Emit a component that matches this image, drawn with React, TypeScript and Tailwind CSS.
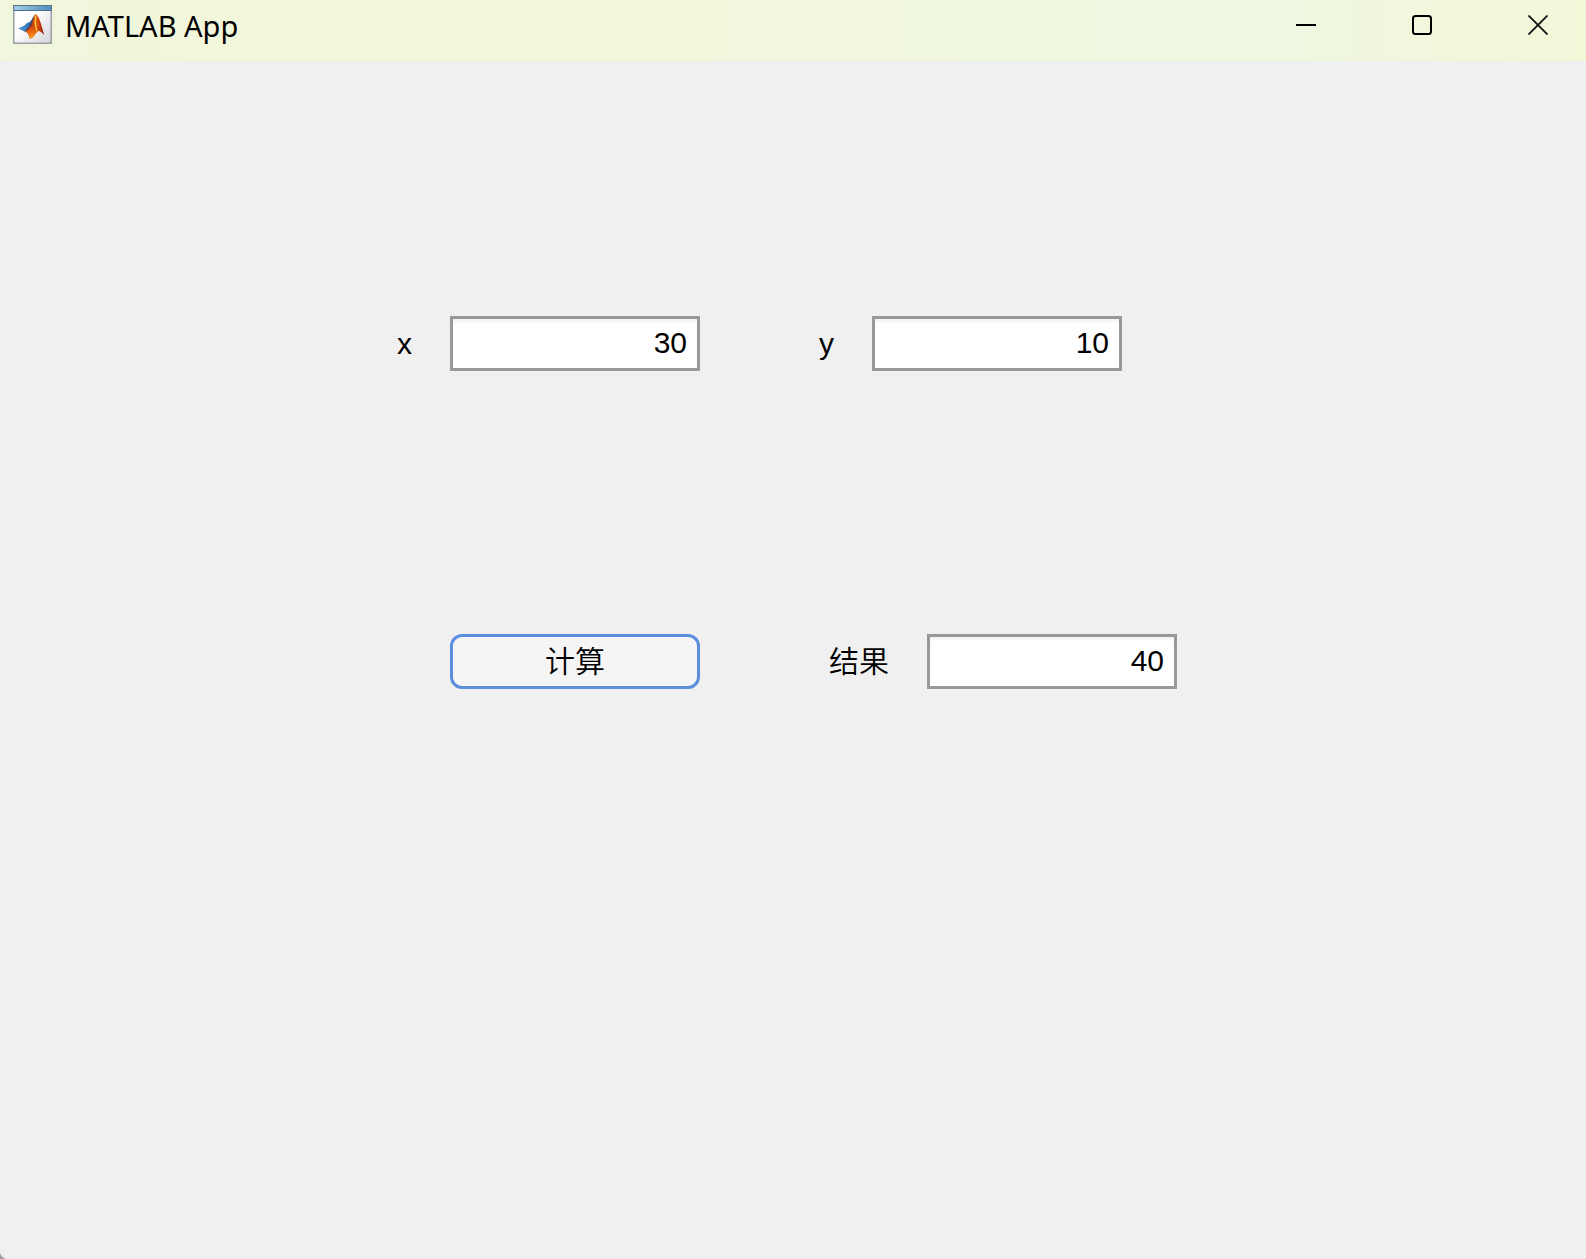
import React, { useState } from 'react'

interface NumberFieldProps {
  id: string
  label: string
  value: string
  onChange?: (value: string) => void
}

function NumberField({ id, label, value, onChange }: NumberFieldProps) {
  return (
    <div className="flex items-center gap-[38px]">
      <label htmlFor={id} className="leading-9 whitespace-nowrap">
        {label}
      </label>
      <input
        id={id}
        type="text"
        inputMode="decimal"
        value={value}
        readOnly={!onChange}
        onChange={e => onChange?.(e.target.value)}
        className="w-[250px] h-[55px] border-3 border-[#999999] bg-white pr-2.5 pb-0.5 text-right shadow-[inset_0_3px_2px_#f4f4f4] outline-none"
      />
    </div>
  )
}

// Membrane logo inside a small window frame
function AppIcon() {
  return (
    <svg width="39" height="39" viewBox="0 0 39 39" aria-hidden="true">
      <defs>
        <linearGradient id="frame" x1="0" y1="0" x2="1" y2="1">
          <stop offset="0.4" stopColor="#ffffff" />
          <stop offset="1" stopColor="#d3d3d8" />
        </linearGradient>
        <linearGradient id="bar" x1="0" y1="0" x2="1" y2="0">
          <stop offset="0" stopColor="#a3cce4" />
          <stop offset="1" stopColor="#4f8fc0" />
        </linearGradient>
        <linearGradient id="blue" x1="0" y1="0" x2="1" y2="0">
          <stop offset="0" stopColor="#5a9fd6" />
          <stop offset="0.55" stopColor="#3478b4" />
          <stop offset="1" stopColor="#28345c" />
        </linearGradient>
        <linearGradient id="flame" x1="0" y1="0" x2="1" y2="0">
          <stop offset="0" stopColor="#5b1f2a" />
          <stop offset="0.35" stopColor="#8f2a1a" />
          <stop offset="0.5" stopColor="#e8640f" />
          <stop offset="0.64" stopColor="#e2500f" />
          <stop offset="1" stopColor="#8a1a0e" />
        </linearGradient>
        <linearGradient id="base" x1="0" y1="0" x2="0" y2="1">
          <stop offset="0" stopColor="#c23a10" />
          <stop offset="0.5" stopColor="#e8640f" />
          <stop offset="1" stopColor="#fba62a" />
        </linearGradient>
      </defs>
      <rect x="0.75" y="0.75" width="37.5" height="37.5" fill="url(#frame)" stroke="#9a9ea6" strokeWidth="1.5" />
      <rect x="1" y="1" width="37" height="4.5" fill="url(#bar)" />
      <path d="M0.5 5.5h38" stroke="#4b6f91" strokeWidth="1" />
      <path d="M0.5 5V0.5h38V5" fill="none" stroke="#62727f" strokeWidth="1" />
      <path d="M5 23.5L11.5 20.5C13.5 18 14.5 17.5 16.5 17.3C18.5 16 20 11.5 22.3 9.3L19 20L13 27.5L10.5 26Z" fill="url(#blue)" />
      <path d="M22.5 9C20.5 11 19.5 18 16.5 21.5C14.8 23.7 13 25.5 11.5 26.6C14 26.5 15 28 17 33.8C21.5 32.5 22.5 26.5 25.5 26C27.5 26 29 28 31.5 30C29 24 27 11 22.5 9Z" fill="url(#flame)" />
      <path d="M12 26.7C15 25.8 17.5 22 20 19C21.5 21 23.5 24 25.3 26C22.5 27.5 21.5 32.5 17 33.8C15.3 28.7 14 26.6 12 26.7Z" fill="url(#base)" />
      <path d="M22.7 10.5C22 15 22.3 21 23.8 26" fill="none" stroke="#ffc83c" strokeWidth="1.3" />
    </svg>
  )
}

function TitleBar() {
  return (
    <header className="flex h-[61px] items-start justify-between bg-[linear-gradient(90deg,#f0f7dd_0%,#f2f6da_12%,#f3f6da_38%,#f1f7de_52%,#eff7e0_70%,#eff7e0_82%,#f2f6db_92%,#f4f6d8_100%)] pr-[38px] pl-[13px] pt-[5px]">
      <div className="flex items-start gap-[13px]">
        <AppIcon />
        <h1 className="text-[29px] leading-[42px] font-['Noto_Sans',sans-serif]">MATLAB App</h1>
      </div>
      <div className="flex gap-24 pt-2.5">
        <button type="button" aria-label="Minimize">
          <svg className="block" width="20" height="20" viewBox="0 0 20 20">
            <path d="M0 10h20" stroke="black" strokeWidth="2" />
          </svg>
        </button>
        <button type="button" aria-label="Maximize">
          <svg className="block" width="20" height="20" viewBox="0 0 20 20" fill="none">
            <rect x="1" y="1" width="18" height="18" rx="2.5" stroke="black" strokeWidth="2" />
          </svg>
        </button>
        <button type="button" aria-label="Close">
          <svg className="block" width="20" height="20" viewBox="0 0 20 20">
            <path d="M0.5 0.5l19 19M19.5 0.5l-19 19" stroke="#111111" strokeWidth="1.8" />
          </svg>
        </button>
      </div>
    </header>
  )
}

export default function App() {
  const [x, setX] = useState('30')
  const [y, setY] = useState('10')
  const [result, setResult] = useState('40')

  const calculate = () => setResult(String(Number(x) + Number(y)))

  return (
    <div className="relative flex min-h-screen flex-col overflow-hidden bg-[#f0f0f0] text-black">
      <TitleBar />
      <main className="mx-auto grid w-full max-w-[792px] grid-cols-[303px_1fr] gap-x-[119px] gap-y-[263px] pt-[255px] text-[30px] font-['Liberation_Sans','Noto_Sans_CJK_SC',sans-serif]">
        <NumberField id="x" label="x" value={x} onChange={setX} />
        <NumberField id="y" label="y" value={y} onChange={setY} />
        <button
          type="button"
          onClick={calculate}
          className="h-[55px] w-[250px] justify-self-end rounded-xl border-3 border-[#5b8fdd] bg-[#f5f5f5] leading-9 font-[350]"
        >
          计算
        </button>
        <div className="pl-2.5 font-[350]">
          <NumberField id="result" label="结果" value={result} />
        </div>
      </main>
      {/* rounded window corner */}
      <svg className="absolute bottom-0 left-0" width="6" height="6" viewBox="0 0 6 6" aria-hidden="true">
        <path d="M0 0C1 3 3 5 6 6H0Z" fill="#a0a0a0" />
      </svg>
    </div>
  )
}
